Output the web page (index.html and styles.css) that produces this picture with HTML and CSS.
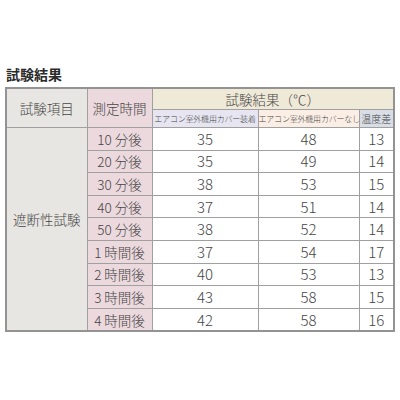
FILE: index.html
```html
<!DOCTYPE html>
<html lang="ja">
<head>
<meta charset="utf-8">
<link rel="stylesheet" href="styles.css">
</head>
<body>
<div class="page">
  <h1 class="title">試験結果</h1>
  <table class="results">
    <colgroup>
      <col class="c1"><col class="c2"><col class="c3"><col class="c4"><col class="c5">
    </colgroup>
    <thead>
      <tr class="h1">
        <th rowspan="2" class="item">試験項目</th>
        <th rowspan="2" class="time">測定時間</th>
        <th colspan="3" class="group">試験結果（℃）</th>
      </tr>
      <tr class="h2">
        <th class="sub sub-a">エアコン室外機用カバー装着</th>
        <th class="sub sub-b">エアコン室外機用カバーなし</th>
        <th class="sub sub-c">温度差</th>
      </tr>
    </thead>
    <tbody>
      <tr><td rowspan="9" class="item-body"><span>遮断性試験</span></td><td class="t">10 分後</td><td>35</td><td>48</td><td>13</td></tr>
      <tr><td class="t">20 分後</td><td>35</td><td>49</td><td>14</td></tr>
      <tr><td class="t">30 分後</td><td>38</td><td>53</td><td>15</td></tr>
      <tr><td class="t">40 分後</td><td>37</td><td>51</td><td>14</td></tr>
      <tr><td class="t">50 分後</td><td>38</td><td>52</td><td>14</td></tr>
      <tr><td class="t">1 時間後</td><td>37</td><td>54</td><td>17</td></tr>
      <tr><td class="t">2 時間後</td><td>40</td><td>53</td><td>13</td></tr>
      <tr><td class="t">3 時間後</td><td>43</td><td>58</td><td>15</td></tr>
      <tr><td class="t">4 時間後</td><td>42</td><td>58</td><td>16</td></tr>
    </tbody>
  </table>
</div>
</body>
</html>
```
FILE: styles.css
```css
html, body {
  margin: 0;
  padding: 0;
  background: #ffffff;
}
.page {
  width: 400px;
  height: 400px;
  padding: 66px 0 0 5px;
  box-sizing: border-box;
  font-family: "Noto Sans CJK JP", "Noto Sans", sans-serif;
  color: #454545;
}
.title {
  margin: 0 0 4px 1px;
  font-size: 14px;
  line-height: 17px;
  font-weight: 700;
  color: #2a2a2a;
  letter-spacing: 0;
}
.results {
  border-collapse: collapse;
  table-layout: fixed;
  width: 388px;
  border: 2px solid #939393;
}
.c1 { width: 81px; }
.c2 { width: 65px; }
.c3 { width: 106px; }
.c4 { width: 101px; }
.c5 { width: 35px; }
.results th, .results td {
  border: 1px solid #a0a0a0;
  padding: 0;
  text-align: center;
  vertical-align: middle;
  font-weight: 300;
  white-space: nowrap;
  overflow: hidden;
}
.h1 th { height: 20px; font-size: 13.5px; line-height: 20px; }
.h2 th { height: 17px; }
.item { background: #e8e6e2; }
.time { background: #ecd9dd; }
.group { background: #efe9d8; }
.sub { font-size: 8px; line-height: 17px; letter-spacing: -0.2px; }
.sub-a { background: #e6e5f1; }
.sub-b { background: #fbefe5; }
.sub-c { background: #d9dee6; font-size: 10px; letter-spacing: 0; }
.results tbody td {
  height: 21.6px;
  font-size: 15px;
  line-height: 20px;
}
.results tbody td.t { background: #ecd9dd; font-size: 13.5px; }
.results tbody td.item-body {
  background: #e8e6e2;
  font-size: 13.5px;
  padding-bottom: 20px;
}
```
